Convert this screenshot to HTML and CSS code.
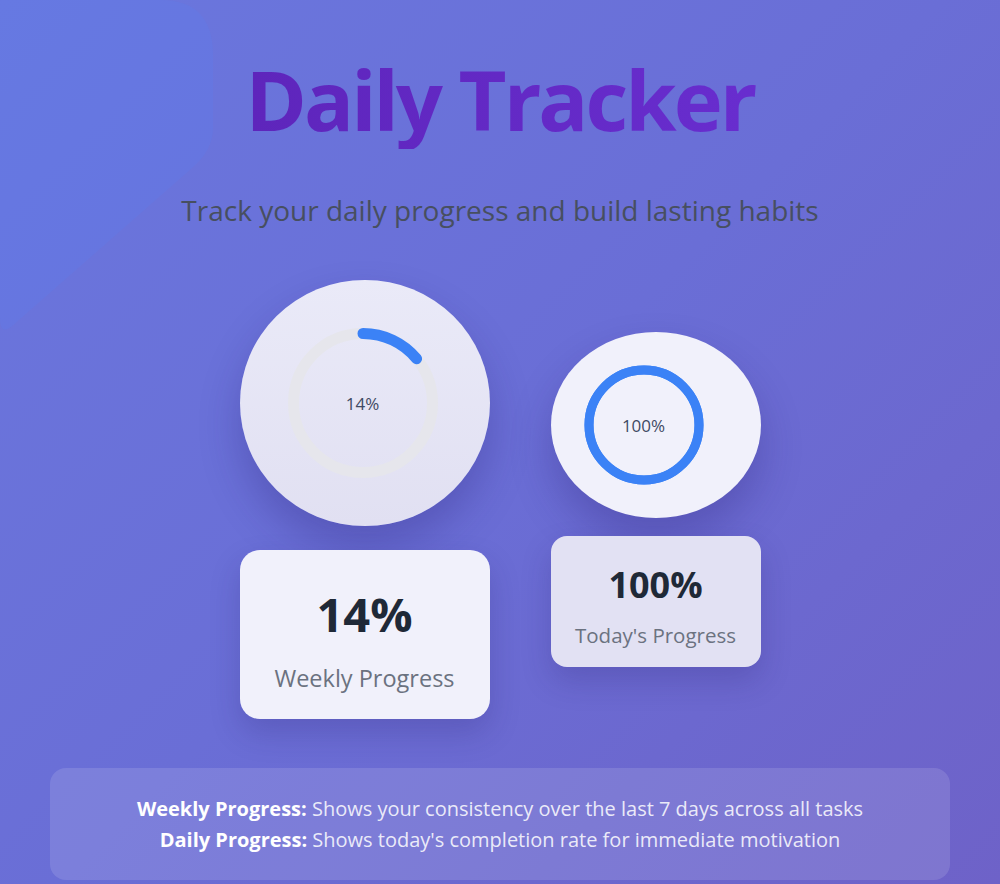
FILE: index.html
```html
<!DOCTYPE html>
<html lang="en">
<head>
  <meta charset="UTF-8">
  <meta name="viewport" content="width=device-width, initial-scale=1.0">
  <title>Daily Tracker</title>
  <link rel="stylesheet" href="styles.css">
</head>
<body>
  <svg class="blob" width="220" height="340" viewBox="0 0 220 340" aria-hidden="true">
    <path d="M0 0 H160 Q213 0 213 55 V128 Q213 150 192 168 L12 326 Q0 336 0 318 Z"/>
  </svg>
  <div class="container">
    <h1 class="title">Daily Tracker</h1>
    <p class="subtitle">Track your daily progress and build lasting habits</p>

    <div class="progress-row">
      <div class="progress-col">
        <div class="dial dial-week">
          <div class="ring ring-week">
            <svg width="150" height="150" viewBox="0 0 150 150">
              <circle class="track" cx="75" cy="75" r="69.5" stroke-width="11"/>
              <circle class="bar" cx="75" cy="75" r="69.5" stroke-width="11"
                      stroke-dasharray="61.1 500" transform="rotate(-90 75 75)"/>
            </svg>
            <span class="ring-label">14%</span>
          </div>
        </div>
        <div class="stat stat-week">
          <div class="stat-value">14%</div>
          <div class="stat-name">Weekly Progress</div>
        </div>
      </div>

      <div class="progress-col">
        <div class="dial dial-day">
          <div class="ring ring-day">
            <svg width="120" height="120" viewBox="0 0 120 120">
              <circle class="track" cx="60" cy="60" r="55" stroke-width="9"/>
              <circle class="bar" cx="60" cy="60" r="55" stroke-width="9"
                      stroke-dasharray="345.6 500" transform="rotate(-90 60 60)"/>
            </svg>
            <span class="ring-label">100%</span>
          </div>
        </div>
        <div class="stat stat-day">
          <div class="stat-value">100%</div>
          <div class="stat-name">Today's Progress</div>
        </div>
      </div>
    </div>

    <div class="info">
      <p><strong>Weekly Progress:</strong> Shows your consistency over the last 7 days across all tasks</p>
      <p><strong>Daily Progress:</strong> Shows today's completion rate for immediate motivation</p>
    </div>
  </div>
</body>
</html>
```

FILE: styles.css
```css
html, body {
  margin: 0;
  height: 100%;
}
body {
  font-family: "Open Sans", "Noto Sans", sans-serif;
  background: linear-gradient(135deg, #6a77de 0%, #6a6ed6 50%, #6e62c8 100%);
  color: #1f2937;
  overflow: hidden;
  position: relative;
}
.blob {
  position: absolute;
  top: 0;
  left: 0;
  fill: rgba(80, 135, 255, 0.14);
}
.container {
  position: relative;
  max-width: 900px;
  margin: 0 auto;
  padding-top: 49px;
}
.title {
  margin: 0;
  text-align: center;
  font-size: 83px;
  line-height: 1.2;
  font-weight: 700;
  letter-spacing: -3px;
  background: linear-gradient(90deg, #5a22b4, #6c30d6);
  -webkit-background-clip: text;
  background-clip: text;
  color: transparent;
}
.subtitle {
  margin: 43px 0 0;
  text-align: center;
  font-size: 28px;
  line-height: 1.35;
  color: #474f60;
}
.progress-row {
  display: flex;
  justify-content: center;
  align-items: center;
  gap: 61px;
  margin-top: 51px;
}
.progress-col {
  display: flex;
  flex-direction: column;
  align-items: center;
}
.dial {
  display: flex;
  align-items: center;
  justify-content: center;
  border-radius: 50%;
  box-shadow: 0 22px 40px rgba(40, 30, 110, 0.28);
}
.dial-week {
  width: 250px;
  height: 246px;
  background: linear-gradient(180deg, #eaeaf8 0%, #e1e0f2 100%);
}
.dial-day {
  width: 210px;
  height: 186px;
  background: #f1f1fb;
}
.ring {
  display: grid;
  place-items: center;
}
.ring svg, .ring-label {
  grid-area: 1 / 1;
}
.ring-day {
  margin-right: 24px;
}
.ring-week {
  margin-right: 4px;
}
.track {
  fill: none;
  stroke: #e6e6ec;
}
.bar {
  fill: none;
  stroke: #3b82f6;
  stroke-linecap: round;
}
.ring-day .track {
  stroke: #3b82f6;
}
.ring-label {
  font-size: 17px;
  font-weight: 500;
  color: #3f4a63;
}
.stat {
  display: flex;
  flex-direction: column;
  align-items: center;
  box-sizing: border-box;
  box-shadow: 0 14px 30px rgba(40, 30, 110, 0.22);
}
.stat-week {
  width: 250px;
  height: 169px;
  margin-top: 24px;
  padding-top: 36px;
  border-radius: 20px;
  background: #f1f1fb;
}
.stat-day {
  width: 210px;
  height: 131px;
  margin-top: 18px;
  padding-top: 27px;
  border-radius: 16px;
  background: #e2e1f3;
}
.stat-value {
  font-weight: 700;
  line-height: 1.2;
  color: #1f2937;
}
.stat-week .stat-value {
  font-size: 47px;
}
.stat-day .stat-value {
  font-size: 36px;
}
.stat-name {
  color: #6b7280;
  line-height: 1.4;
}
.stat-week .stat-name {
  font-size: 23.5px;
  margin-top: 19px;
}
.stat-day .stat-name {
  font-size: 20.5px;
  margin-top: 14px;
}
.info {
  margin-top: 49px;
  padding: 25px 20px;
  border-radius: 16px;
  background: rgba(255, 255, 255, 0.12);
  text-align: center;
  color: rgba(255, 255, 255, 0.86);
  font-size: 20px;
  line-height: 31px;
}
.info p {
  margin: 0;
}
.info strong {
  color: #fff;
}
```
